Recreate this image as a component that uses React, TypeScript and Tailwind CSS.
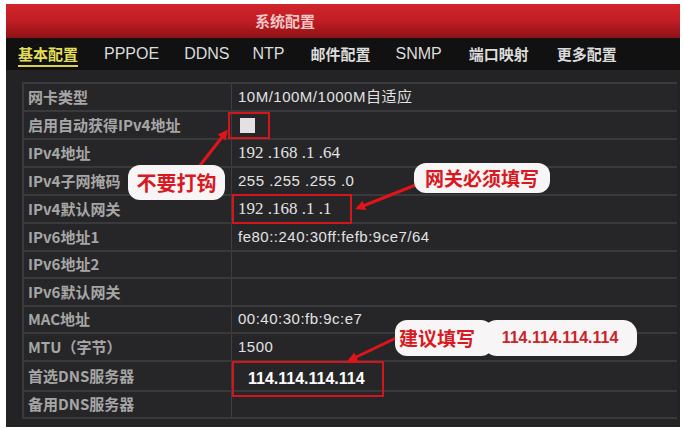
const tabs = [
  { t: "PPPOE", mr: "mr-[25px]", cjk: false },
  { t: "DDNS", mr: "mr-[23px]", cjk: false },
  { t: "NTP", mr: "mr-[26px]", cjk: false },
  { t: "邮件配置", mr: "mr-[25px]", cjk: true },
  { t: "SNMP", mr: "mr-[27px]", cjk: false },
  { t: "端口映射", mr: "mr-[28px]", cjk: true },
  { t: "更多配置", mr: "", cjk: true },
];

type Row = { label: string; value?: string; h: string; serif?: boolean };

const rows: Row[] = [
  { label: "网卡类型", value: "10M/100M/1000M自适应", h: "h-[28px]" },
  { label: "启用自动获得IPv4地址", h: "h-[28px]" },
  { label: "IPv4地址", value: "192 .168 .1 .64", h: "h-[28px]", serif: true },
  { label: "IPv4子网掩码", value: "255 .255 .255 .0", h: "h-[28px]" },
  { label: "IPv4默认网关", value: "192 .168 .1 .1", h: "h-[28px]", serif: true },
  { label: "IPv6地址1", value: "fe80::240:30ff:fefb:9ce7/64", h: "h-[28px]" },
  { label: "IPv6地址2", h: "h-[27px]" },
  { label: "IPv6默认网关", h: "h-[28px]" },
  { label: "MAC地址", value: "00:40:30:fb:9c:e7", h: "h-[27px]" },
  { label: "MTU（字节）", value: "1500", h: "h-[28px]" },
  { label: "首选DNS服务器", value: "114.114.114.114", h: "h-[30px]" },
  { label: "备用DNS服务器", h: "h-[27px]" },
];

export default function App() {
  return (
    <div className="relative w-[684px] h-[430px] bg-white pt-1 pl-1.5 overflow-hidden [font-family:'Liberation_Sans','Noto_Sans_CJK_SC',sans-serif]">
      <div className="w-[674px] h-[423px] bg-[#232325] flex flex-col">
        {/* title bar */}
        <div className="h-[34px] bg-gradient-to-b from-[#d2242b] via-[#c01d24] to-[#8e1216] flex items-center pl-[249px]">
          <span className="text-[15px] font-bold text-[#f3c7c7] [font-family:'Noto_Sans_CJK_SC',sans-serif]">系统配置</span>
        </div>

        {/* tabs */}
        <div className="h-[32px] bg-[#111112] flex items-center pl-3 text-[16px] text-[#dcdcdc]">
          <span className="relative text-[15px] font-bold text-[#e4de5a] mr-[26px] [font-family:'Noto_Sans_CJK_SC',sans-serif]">
            基本配置
            <span className="absolute left-0 right-0 -bottom-[2px] h-[2px] bg-[#d8d24a]" />
          </span>
          {tabs.map((t) => (
            <span
              key={t.t}
              className={`${t.mr} ${t.cjk ? "text-[15px] font-bold [font-family:'Noto_Sans_CJK_SC',sans-serif]" : ""}`}
            >
              {t.t}
            </span>
          ))}
        </div>

        {/* table */}
        <div className="flex-1 pt-3 pl-4 pr-[3px]">
          <div className="border-l-2 border-[#3a3a3c] border-t-2">
            {rows.map((r, i) => (
              <div key={i} className={`${r.h} flex border-b-2 border-[#3a3a3c] bg-[#262628]`}>
                <div className="w-[208px] shrink-0 border-r border-[#3e3e40] flex items-center pl-1 text-[15px] text-[#a6a6a6] font-bold [font-family:'Noto_Sans_CJK_SC',sans-serif]">
                  {r.label}
                </div>
                <div className="flex-1 flex items-center pl-1.5 text-[15px] tracking-[0.5px] text-[#e2e2e2]">
                  {i === 1 && (
                    <div className="-ml-[10px] w-[42px] h-[27px] border-2 border-[#d4151b] flex items-center pl-[10px]">
                      <div className="w-[15px] h-[15px] bg-[#e4e0e4]" />
                    </div>
                  )}
                  {i === 4 && (
                    <div className="-ml-1.5 h-[30px] w-[120px] border-2 border-[#d4151b] flex items-center pl-1 text-[17px] tracking-normal [font-family:'Liberation_Serif',serif]">
                      {r.value}
                    </div>
                  )}
                  {i === 10 && (
                    <div className="-ml-1.5 h-[36px] mt-[6px] w-[152px] border-2 border-[#d4151b] flex items-center pl-[14px] text-[16px] tracking-normal font-bold text-white">
                      {r.value}
                    </div>
                  )}
                  {i !== 1 && i !== 4 && i !== 10 && r.value && (
                    <span className={r.serif ? "text-[17px] tracking-normal [font-family:'Liberation_Serif',serif]" : ""}>{r.value}</span>
                  )}
                </div>
              </div>
            ))}
          </div>
        </div>
      </div>

      {/* arrows */}
      <svg className="absolute left-0 top-0 pointer-events-none" width="684" height="430">
        <defs>
          <marker id="ah" markerWidth="10" markerHeight="10" refX="7" refY="5" orient="auto" markerUnits="userSpaceOnUse">
            <path d="M0,0 L10,5 L0,10 Z" fill="#e0141a" />
          </marker>
        </defs>
        <line x1="198" y1="168" x2="226" y2="132" stroke="#e0141a" strokeWidth="3" markerEnd="url(#ah)" />
        <line x1="418" y1="184" x2="358" y2="208" stroke="#e0141a" strokeWidth="3" markerEnd="url(#ah)" />
        <line x1="396" y1="338" x2="350" y2="360" stroke="#e0141a" strokeWidth="3" markerEnd="url(#ah)" />
      </svg>

      {/* callouts */}
      <div className="absolute left-[128px] top-[165px] w-[97px] h-[35px] rounded-[12px] bg-[#f7f5f5] flex items-center justify-center text-[20px] font-bold text-[#d8191f] [font-family:'Noto_Sans_CJK_SC',sans-serif]">
        不要打钩
      </div>
      <div className="absolute left-[414px] top-[163px] w-[136px] h-[30px] rounded-[12px] bg-[#f7f5f5] flex items-center justify-center text-[19px] font-bold text-[#d8191f] [font-family:'Noto_Sans_CJK_SC',sans-serif]">
        网关必须填写
      </div>
      <div className="absolute left-[395px] top-[320px] flex items-center">
        <div className="h-[36px] w-[98px] rounded-[12px] bg-[#f7f5f5] flex items-center pl-1 text-[19px] font-bold text-[#d8191f] [font-family:'Noto_Sans_CJK_SC',sans-serif]">
          建议填写
        </div>
        <div className="-ml-[10px] h-[36px] w-[154px] rounded-[14px] bg-[#f7f5f5] flex items-center justify-center text-[16px] font-bold text-[#c8242a]">
          114.114.114.114
        </div>
      </div>
    </div>
  );
}
